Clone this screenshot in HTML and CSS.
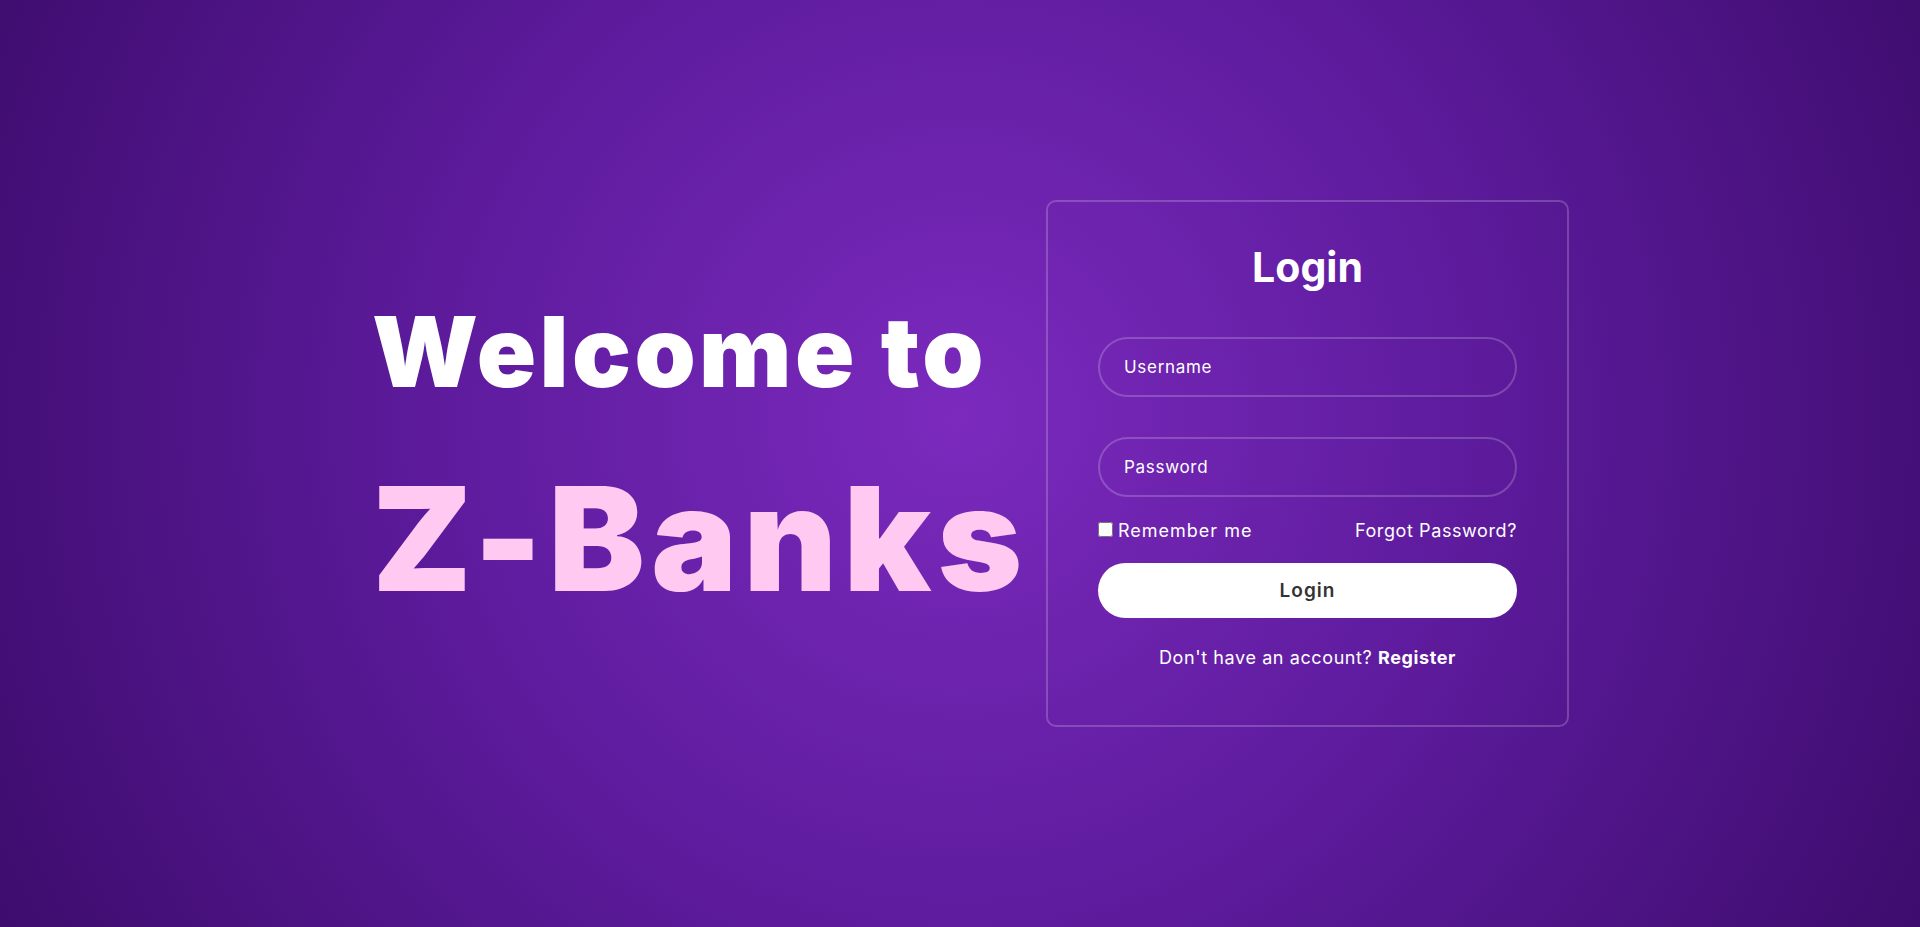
FILE: index.html
```html
<!DOCTYPE html>
<html lang="en">
<head>
<meta charset="UTF-8">
<title>Z-Banks Login</title>
<link rel="stylesheet" href="styles.css">
</head>
<body>
<main class="page">
  <section class="hero">
    <h1 class="hero-welcome">Welcome to</h1>
    <h1 class="hero-brand">Z-Banks</h1>
  </section>
  <form class="card">
    <h2 class="card-title">Login</h2>
    <div class="field"><input class="input" type="text" placeholder="Username"></div>
    <div class="field field-second"><input class="input" type="password" placeholder="Password"></div>
    <div class="options">
      <label class="remember"><input class="check" type="checkbox"><span class="remember-text">Remember me</span></label>
      <a class="forgot" href="#">Forgot Password?</a>
    </div>
    <button class="btn" type="button">Login</button>
    <p class="register">Don't have an account? <a class="register-link" href="#">Register</a></p>
  </form>
</main>
</body>
</html>
```

FILE: styles.css
```css
* { box-sizing: border-box; }
html, body { margin: 0; padding: 0; }
body {
  height: 927px;
  font-family: Inter, "Noto Sans", "Liberation Sans", sans-serif;
  color: #fff;
  background: radial-gradient(circle farthest-corner at 50% 45%, #7b2abd 0%, #5f1c9f 45%, #3d0c6d 100%);
}
.page {
  height: 100vh;
  display: flex;
  align-items: center;
  padding-left: 372px;
}
.hero {
  width: 674px;
  flex-shrink: 0;
  margin-bottom: 11px;
}
.hero-welcome {
  margin: 0;
  font-size: 98px;
  line-height: 118px;
  font-weight: 900;
  letter-spacing: 3.4px;
  color: #fff;
  white-space: nowrap;
}
.hero-brand {
  margin: 43px 0 0;
  font-size: 144px;
  line-height: 170px;
  font-weight: 900;
  letter-spacing: 6.5px;
  color: #ffc9f2;
  white-space: nowrap;
}
.card {
  width: 523px;
  height: 527px;
  flex-shrink: 0;
  border: 2px solid rgba(255,255,255,0.2);
  border-radius: 10px;
  padding: 40px 50px 0;
  display: flex;
  flex-direction: column;
}
.card-title {
  margin: 0 0 45px;
  text-align: center;
  font-size: 41px;
  line-height: 50px;
  font-weight: 700;
}
.field { width: 100%; }
.field-second { margin-top: 40px; }
.input {
  width: 100%;
  height: 60px;
  border-radius: 30px;
  border: 2px solid rgba(255,255,255,0.2);
  background: transparent;
  padding: 0 24px;
  font-family: inherit;
  font-size: 17px;
  letter-spacing: 0.7px;
  color: #fff;
  outline: none;
}
.input::placeholder { color: #fff; opacity: 1; }
.options {
  margin-top: 20px;
  display: flex;
  justify-content: space-between;
  align-items: center;
  font-size: 18px;
  line-height: 27px;
  letter-spacing: 0.6px;
}
.remember { display: flex; align-items: center; }
.remember-text { letter-spacing: 1px; }
.check {
  flex-shrink: 0;
  width: 15px;
  height: 15px;
  margin: 0 5px 3px 0;
}
.forgot { color: #fff; text-decoration: none; }
.btn {
  margin-top: 19px;
  width: 100%;
  height: 55px;
  border: none;
  border-radius: 28px;
  background: #fff;
  color: #333;
  font-family: inherit;
  font-size: 19px;
  font-weight: 600;
  letter-spacing: 1px;
  cursor: pointer;
}
.register {
  margin: 26px 0 0;
  text-align: center;
  font-size: 18px;
  line-height: 27px;
  letter-spacing: 0.6px;
}
.register-link { color: #fff; text-decoration: none; font-weight: 700; }
```
